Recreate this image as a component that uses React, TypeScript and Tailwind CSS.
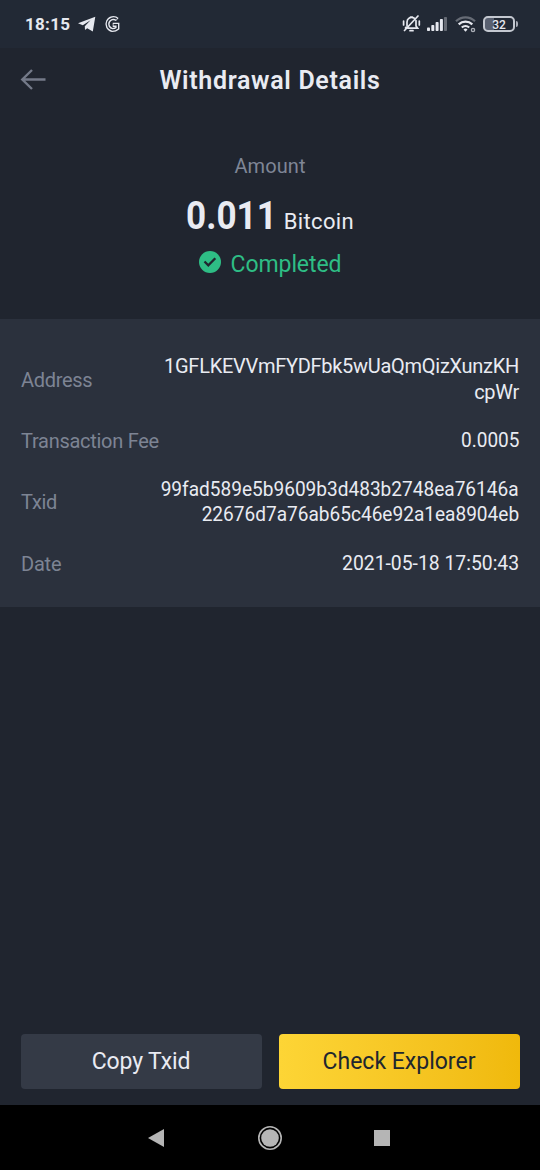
import React from "react";
import clsx from "clsx";

type Line = { text: string; className?: string };

type Detail = {
  label: string;
  labelClass?: string;
  lines: Line[];
};

const details: Detail[] = [
  {
    label: "Address",
    labelClass: "tracking-[-0.3px]",
    lines: [
      { text: "1GFLKEVVmFYDFbk5wUaQmQizXunzKH", className: "tracking-[-0.28px]" },
      { text: "cpWr", className: "tracking-[-0.3px]" },
    ],
  },
  {
    label: "Transaction Fee",
    labelClass: "tracking-[-0.28px]",
    lines: [{ text: "0.0005", className: "scale-x-[0.95]" }],
  },
  {
    label: "Txid",
    labelClass: "tracking-[-0.3px]",
    lines: [
      { text: "99fad589e5b9609b3d483b2748ea76146a", className: "scale-x-[0.953]" },
      { text: "22676d7a76ab65c46e92a1ea8904eb", className: "scale-x-[0.953]" },
    ],
  },
  {
    label: "Date",
    labelClass: "tracking-[-0.2px]",
    lines: [{ text: "2021-05-18 17:50:43", className: "scale-x-[0.967]" }],
  },
];

const StatusBar = () => (
  <div className="flex h-12 items-center justify-between bg-[#222935] pl-[25px] pr-[22px] text-[#e6e8ef]">
    <div className="flex items-center">
      <span className="w-[45px] whitespace-nowrap text-[17px] font-bold leading-5 tracking-[0.3px]">18:15</span>
      <svg className="ml-2 h-[16px] w-[18px]" viewBox="0 0 18 16" fill="currentColor">
        <path d="M17.3.7 0 7.3 4.8 9.3 12.5 4.3 6.8 10.2 7 14 9.2 12.2 14.8 15.6Z" />
      </svg>
      <svg className="ml-2 h-[18px] w-[17px]" viewBox="0 0 17 18" fill="none">
        <path d="M13.3 4.5A6 6 0 1 0 8.3 15Q11.5 15 13.3 13.3V9.8H8.7" stroke="currentColor" strokeWidth="4.2" />
        <path d="M12.7 4.1A6 6 0 1 0 8.3 15Q11.500 15 13.3 13.3V9.8H9.5" stroke="#222935" strokeWidth="1.4" />
      </svg>
    </div>
    <div className="flex items-center">
      <svg className="h-[18px] w-[19px]" viewBox="0 0 19 18" fill="none" stroke="currentColor" strokeWidth="1.7" strokeLinecap="round">
        <path d="M5 10.5V7a4.6 4.6 0 0 1 7-4M14 5.5v5.5l1.6 2.2H6M3.5 13l.7-.9M8 15.7h3M16 1 2.5 15.5M1.6 6v4M17.3 6v4M8.5 2h2" />
      </svg>
      <svg className="ml-[6px] h-[16px] w-[20px]" viewBox="0 0 20 16" fill="currentColor">
        <rect x="0" y="11.5" width="3" height="3.5" rx=".8" />
        <rect x="4.3" y="9" width="3" height="6" rx=".8" />
        <rect x="8.6" y="6" width="3" height="9" rx=".8" />
        <rect x="12.9" y="3" width="3" height="12" rx=".8" />
        <rect x="17" y="1" width="3" height="14" rx=".8" opacity=".35" />
      </svg>
      <svg className="ml-2 h-[17px] w-[22px]" viewBox="0 0 22 17" fill="none" stroke="currentColor" strokeWidth="2.2">
        <path d="M1 5.2a13.5 13.5 0 0 1 19 0" opacity=".35" />
        <path d="M3.7 8.4a9.8 9.8 0 0 1 13.6 0" />
        <path d="M6.8 11.5a5.4 5.4 0 0 1 7.4 0" />
        <path d="m10.5 15.8-2-2.3a2.8 2.8 0 0 1 4 0Z" fill="currentColor" stroke="none" />
        <circle cx="18" cy="14" r="1.6" strokeWidth="1.4" opacity=".7" />
      </svg>
      <div className="ml-[6px] flex items-center">
        <div className="flex h-[16px] w-[32px] items-center justify-center rounded-[5px] border-2 border-[#c4c8d0] bg-linear-to-r from-[#596070] from-32% to-transparent to-32% pt-px text-[12px] font-medium leading-none">
          32
        </div>
        <div className="ml-px h-[6px] w-[2px] rounded-r bg-[#a9adb7]" />
      </div>
    </div>
  </div>
);

const Header = () => (
  <div className="grid h-16 grid-cols-[80px_1fr_80px] items-center">
    <button className="pl-5" aria-label="Back">
      <svg className="h-[22px] w-[26px]" viewBox="0 0 26 22" fill="none" stroke="#747a89" strokeWidth="2.4">
        <path d="M25.5 10.5H2.5M12 1 2.3 10.5l9.7 9.5" />
      </svg>
    </button>
    <h1 className="whitespace-nowrap pt-0.5 text-center text-[25px] font-semibold leading-8 tracking-[0.68px]">
      Withdrawal Details
    </h1>
  </div>
);

const AmountSection = () => (
  <div className="flex h-[207px] flex-col items-center pt-[40px]">
    <p className="text-[20px] leading-7 tracking-[0.1px] text-[#7f8696]">Amount</p>
    <div className="mt-4 flex items-baseline whitespace-nowrap leading-10">
      <span className="-ml-[10px] origin-right scale-x-90 text-[39px] font-bold">0.011</span>
      <span className="ml-[7px] text-[22px] tracking-[0.35px]">Bitcoin</span>
    </div>
    <div className="mt-[7px] flex items-center text-[#2ebd85]">
      <svg className="mb-[6px] h-[22px] w-[22px]" viewBox="0 0 22 22">
        <circle cx="11" cy="11" r="11" fill="currentColor" />
        <path d="m5.5 10.5 3.8 3.8 7-7" fill="none" stroke="#20252f" strokeWidth="2.3" />
      </svg>
      <span className="ml-[10px] text-[23px] leading-8 tracking-[-0.1px]">Completed</span>
    </div>
  </div>
);

const DetailList = () => (
  <div className="flex h-[288px] flex-col gap-[23px] bg-[#2b313d] px-[21px] pt-[35px] text-[20px]">
    {details.map((item) => (
      <div key={item.label} className="flex items-center justify-between">
        <span className={clsx("whitespace-nowrap leading-[24px] text-[#7d8494]", item.labelClass)}>{item.label}</span>
        <div className="flex flex-col items-end">
          {item.lines.map((line) => (
            <span key={line.text} className={clsx("origin-right whitespace-nowrap leading-[25.6px]", line.className)}>
              {line.text}
            </span>
          ))}
        </div>
      </div>
    ))}
  </div>
);

const NavBar = () => (
  <div className="flex h-[65px] items-center justify-center bg-black pr-0.5 text-[#b5b5b5]">
    <svg className="h-[18px] w-[16px]" viewBox="0 0 16 18" fill="currentColor">
      <path d="M16 0v18L0 9Z" />
    </svg>
    <svg className="ml-[94px] h-6 w-6" viewBox="0 0 24 24">
      <circle cx="12" cy="12" r="11.2" fill="none" stroke="currentColor" strokeWidth="1.6" />
      <circle cx="12" cy="12" r="8.8" fill="currentColor" />
    </svg>
    <div className="ml-[92px] h-4 w-4 bg-[#b5b5b5]" />
  </div>
);

const App = () => {
  return (
    <div className="flex h-[1170px] w-[540px] flex-col bg-[#20252f] font-['Roboto',sans-serif] text-[#e9ebf2]">
      <StatusBar />
      <Header />
      <AmountSection />
      <DetailList />
      <div className="mt-auto flex gap-[17px] px-[20.5px] pb-4 text-[23px]">
        <button className="h-[55px] flex-1 rounded bg-[#343a46] pt-0.5 tracking-[-0.15px]">Copy Txid</button>
        <button className="h-[55px] flex-1 rounded bg-linear-to-r from-[#fdd535] to-[#f0b90b] pt-0.5 text-[#20262f]">
          Check Explorer
        </button>
      </div>
      <NavBar />
    </div>
  );
};

export default App;
